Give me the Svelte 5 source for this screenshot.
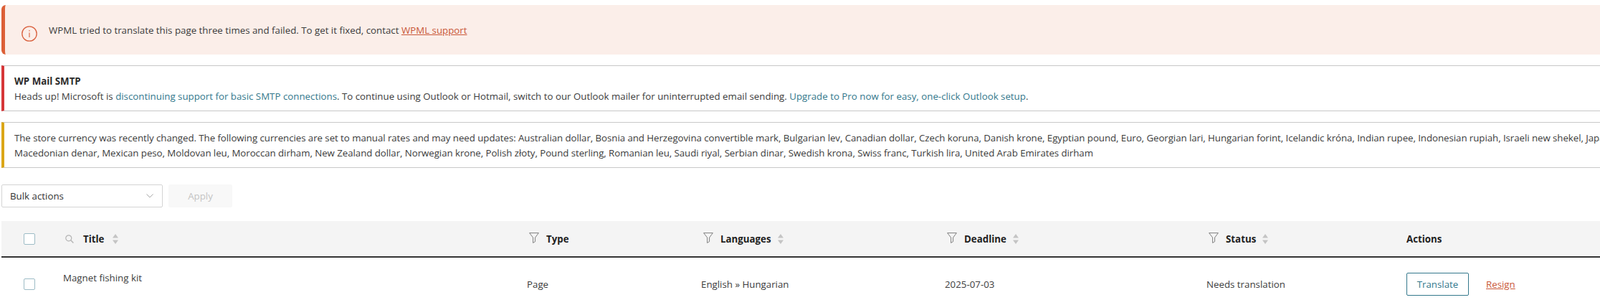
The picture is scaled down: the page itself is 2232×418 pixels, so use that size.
<script lang="ts">
  const columns = [
    { label: 'Type', sortable: false },
    { label: 'Languages', sortable: true },
    { label: 'Deadline', sortable: true },
    { label: 'Status', sortable: true },
  ];
</script>

{#snippet funnel()}
  <svg class="funnel" viewBox="0 0 14 15" width="14" height="15" aria-hidden="true">
    <path d="M0.6 0.6H13.4L8.6 7V12.6L5.6 14.4V7Z" fill="none" stroke="#808080" stroke-width="1" stroke-linejoin="round" />
  </svg>
{/snippet}

{#snippet sorter()}
  <svg class="sorter" viewBox="0 0 10 16" width="10" height="16" aria-hidden="true">
    <path d="M5 1L9 6.5H1Z" fill="#c4c4c4" />
    <path d="M5 15L9 9.5H1Z" fill="#c4c4c4" />
  </svg>
{/snippet}

<div class="page">
  <div class="alert">
    <svg class="alert-icon" viewBox="0 0 22 22" width="22" height="22" aria-hidden="true">
      <circle cx="11" cy="11" r="10.2" fill="none" stroke="#d9603d" stroke-width="1.3" />
      <path d="M11 9.5V16M11 6V7.4" stroke="#d9603d" stroke-width="1.1" fill="none" />
    </svg>
    <p>WPML tried to translate this page three times and failed. To get it fixed, contact <a class="danger" href="#support">WPML support</a></p>
  </div>

  <div class="notice error">
    <strong>WP Mail SMTP</strong>
    <p>Heads up! Microsoft is <a href="#smtp">discontinuing support for basic SMTP connections</a>. To continue using Outlook or Hotmail, switch to our Outlook mailer for uninterrupted email sending. <a href="#pro">Upgrade to Pro now for easy, one-click Outlook setup</a>.</p>
  </div>

  <div class="notice warning">
    <p>The store currency was recently changed. The following currencies are set to manual rates and may need updates: Australian dollar, Bosnia and Herzegovina convertible mark, Bulgarian lev, Canadian dollar, Czech koruna, Danish krone, Egyptian pound, Euro, Georgian lari, Hungarian forint, Icelandic króna, Indian rupee, Indonesian rupiah, Israeli new shekel, Japanese yen, Korean won,<br />Macedonian denar, Mexican peso, Moldovan leu, Moroccan dirham, New Zealand dollar, Norwegian krone, Polish złoty, Pound sterling, Romanian leu, Saudi riyal, Serbian dinar, Swedish krona, Swiss franc, Turkish lira, United Arab Emirates dirham</p>
  </div>

  <div class="bulk">
    <div class="select">
      <span>Bulk actions</span>
      <svg viewBox="0 0 10 6" width="10" height="6" aria-hidden="true">
        <path d="M0.5 0.5L5 5L9.5 0.5" fill="none" stroke="#a8a8a8" />
      </svg>
    </div>
    <div class="apply">Apply</div>
  </div>

  <table>
    <colgroup>
      <col class="c-check" />
      <col class="c-title" />
      <col class="c-type" />
      <col class="c-lang" />
      <col class="c-date" />
      <col class="c-status" />
      <col />
    </colgroup>
    <thead>
      <tr>
        <th><span class="checkbox"></span></th>
        <th>
          <span class="head head-title">
            <svg class="search" viewBox="0 0 12 12" width="12" height="12" aria-hidden="true">
              <circle cx="4.8" cy="4.8" r="4" fill="none" stroke="#b4b4b4" stroke-width="1.2" />
              <path d="M7.8 7.8L11.4 11.4" stroke="#b4b4b4" stroke-width="1.4" />
            </svg>
            <b>Title</b>
            {@render sorter()}
          </span>
        </th>
        {#each columns as col}
          <th>
            <span class="head">
              {@render funnel()}
              <b>{col.label}</b>
              {#if col.sortable}{@render sorter()}{/if}
            </span>
          </th>
        {/each}
        <th><b>Actions</b></th>
      </tr>
    </thead>
    <tbody>
      <tr>
        <td><span class="checkbox"></span></td>
        <td class="title-cell">Magnet fishing kit</td>
        <td>Page</td>
        <td>English » Hungarian</td>
        <td>2025-07-03</td>
        <td>Needs translation</td>
        <td>
          <span class="actions">
            <a class="btn" href="#translate">Translate</a>
            <a class="danger" href="#resign">Resign</a>
          </span>
        </td>
      </tr>
    </tbody>
  </table>
</div>

<style>
  :global(body) {
    overflow: hidden;
    background: #fff;
  }

  .page {
    width: 2232px;
    height: 418px;
    overflow: hidden;
    padding: 7px 0 0 2px;
    box-sizing: border-box;
    font-family: "Open Sans", "Noto Sans", sans-serif;
    font-size: 13.3px;
    color: #3c3c3c;
  }

  p {
    margin: 0;
    white-space: nowrap;
  }

  a {
    color: #33788c;
    text-decoration: none;
  }

  a.danger {
    color: #c9583a;
    text-decoration: underline;
  }

  .alert {
    display: flex;
    align-items: center;
    gap: 16px;
    width: 2400px;
    height: 69px;
    box-sizing: border-box;
    padding-left: 23px;
    background: #fbeee9;
    border-left: 5px solid #dc5f37;
    border-radius: 6px 0 0 6px;
  }

  .alert-icon {
    margin-top: 10px;
    flex: none;
  }

  .notice {
    display: flex;
    flex-direction: column;
    justify-content: center;
    width: 2400px;
    height: 64px;
    box-sizing: border-box;
    margin-top: 15px;
    padding: 2px 0 0 14px;
    border-top: 1px solid #c8c8c8;
    border-bottom: 1px solid #c8c8c8;
    border-left: 4px solid #d63638;
    line-height: 21px;
  }

  .notice strong {
    font-weight: 700;
    color: #2c2c2c;
  }

  .warning {
    border-left-color: #dba617;
    letter-spacing: -0.06px;
  }

  .bulk {
    display: flex;
    gap: 8px;
    margin-top: 23px;
  }

  .select {
    display: flex;
    align-items: center;
    justify-content: space-between;
    width: 225px;
    height: 32px;
    box-sizing: border-box;
    padding: 0 12px 0 11px;
    border: 1px solid #d4d4d4;
    border-radius: 2px;
    color: #333;
  }

  .apply {
    display: flex;
    align-items: center;
    justify-content: center;
    width: 89px;
    height: 32px;
    background: #f8f8f8;
    border-radius: 2px;
    color: #c4c4c4;
  }

  table {
    width: 2230px;
    margin-top: 19px;
    border-collapse: collapse;
    table-layout: fixed;
  }

  .c-check { width: 86px; }
  .c-title { width: 647px; }
  .c-type { width: 243px; }
  .c-lang { width: 340px; }
  .c-date { width: 365px; }
  .c-status { width: 279px; }

  th {
    height: 49px;
    padding: 0;
    text-align: left;
    background: #f4f4f4;
    border-bottom: 2px solid #333;
  }

  td {
    height: 74px;
    box-sizing: border-box;
    padding: 0;
    vertical-align: middle;
  }

  th b {
    font-weight: 700;
    color: #1f1f1f;
  }

  th:first-child,
  td:first-child {
    padding-left: 31px;
  }

  .title-cell {
    padding-bottom: 18px;
  }

  .checkbox {
    display: block;
    width: 16px;
    height: 16px;
    box-sizing: border-box;
    background: #fff;
    border: 1px solid #9dbcc6;
    border-radius: 2px;
  }

  .head {
    display: flex;
    align-items: center;
    gap: 10px;
  }

  .head-title {
    padding-left: 3px;
    gap: 13px;
  }

  .funnel {
    margin-top: -2px;
    margin-left: 3px;
  }

  .sorter {
    margin-left: -2px;
  }

  .actions {
    display: flex;
    align-items: center;
    gap: 24px;
  }

  .btn {
    display: flex;
    align-items: center;
    justify-content: center;
    width: 87px;
    height: 32px;
    box-sizing: border-box;
    border: 1px solid #33788c;
    border-radius: 2px;
  }
</style>
